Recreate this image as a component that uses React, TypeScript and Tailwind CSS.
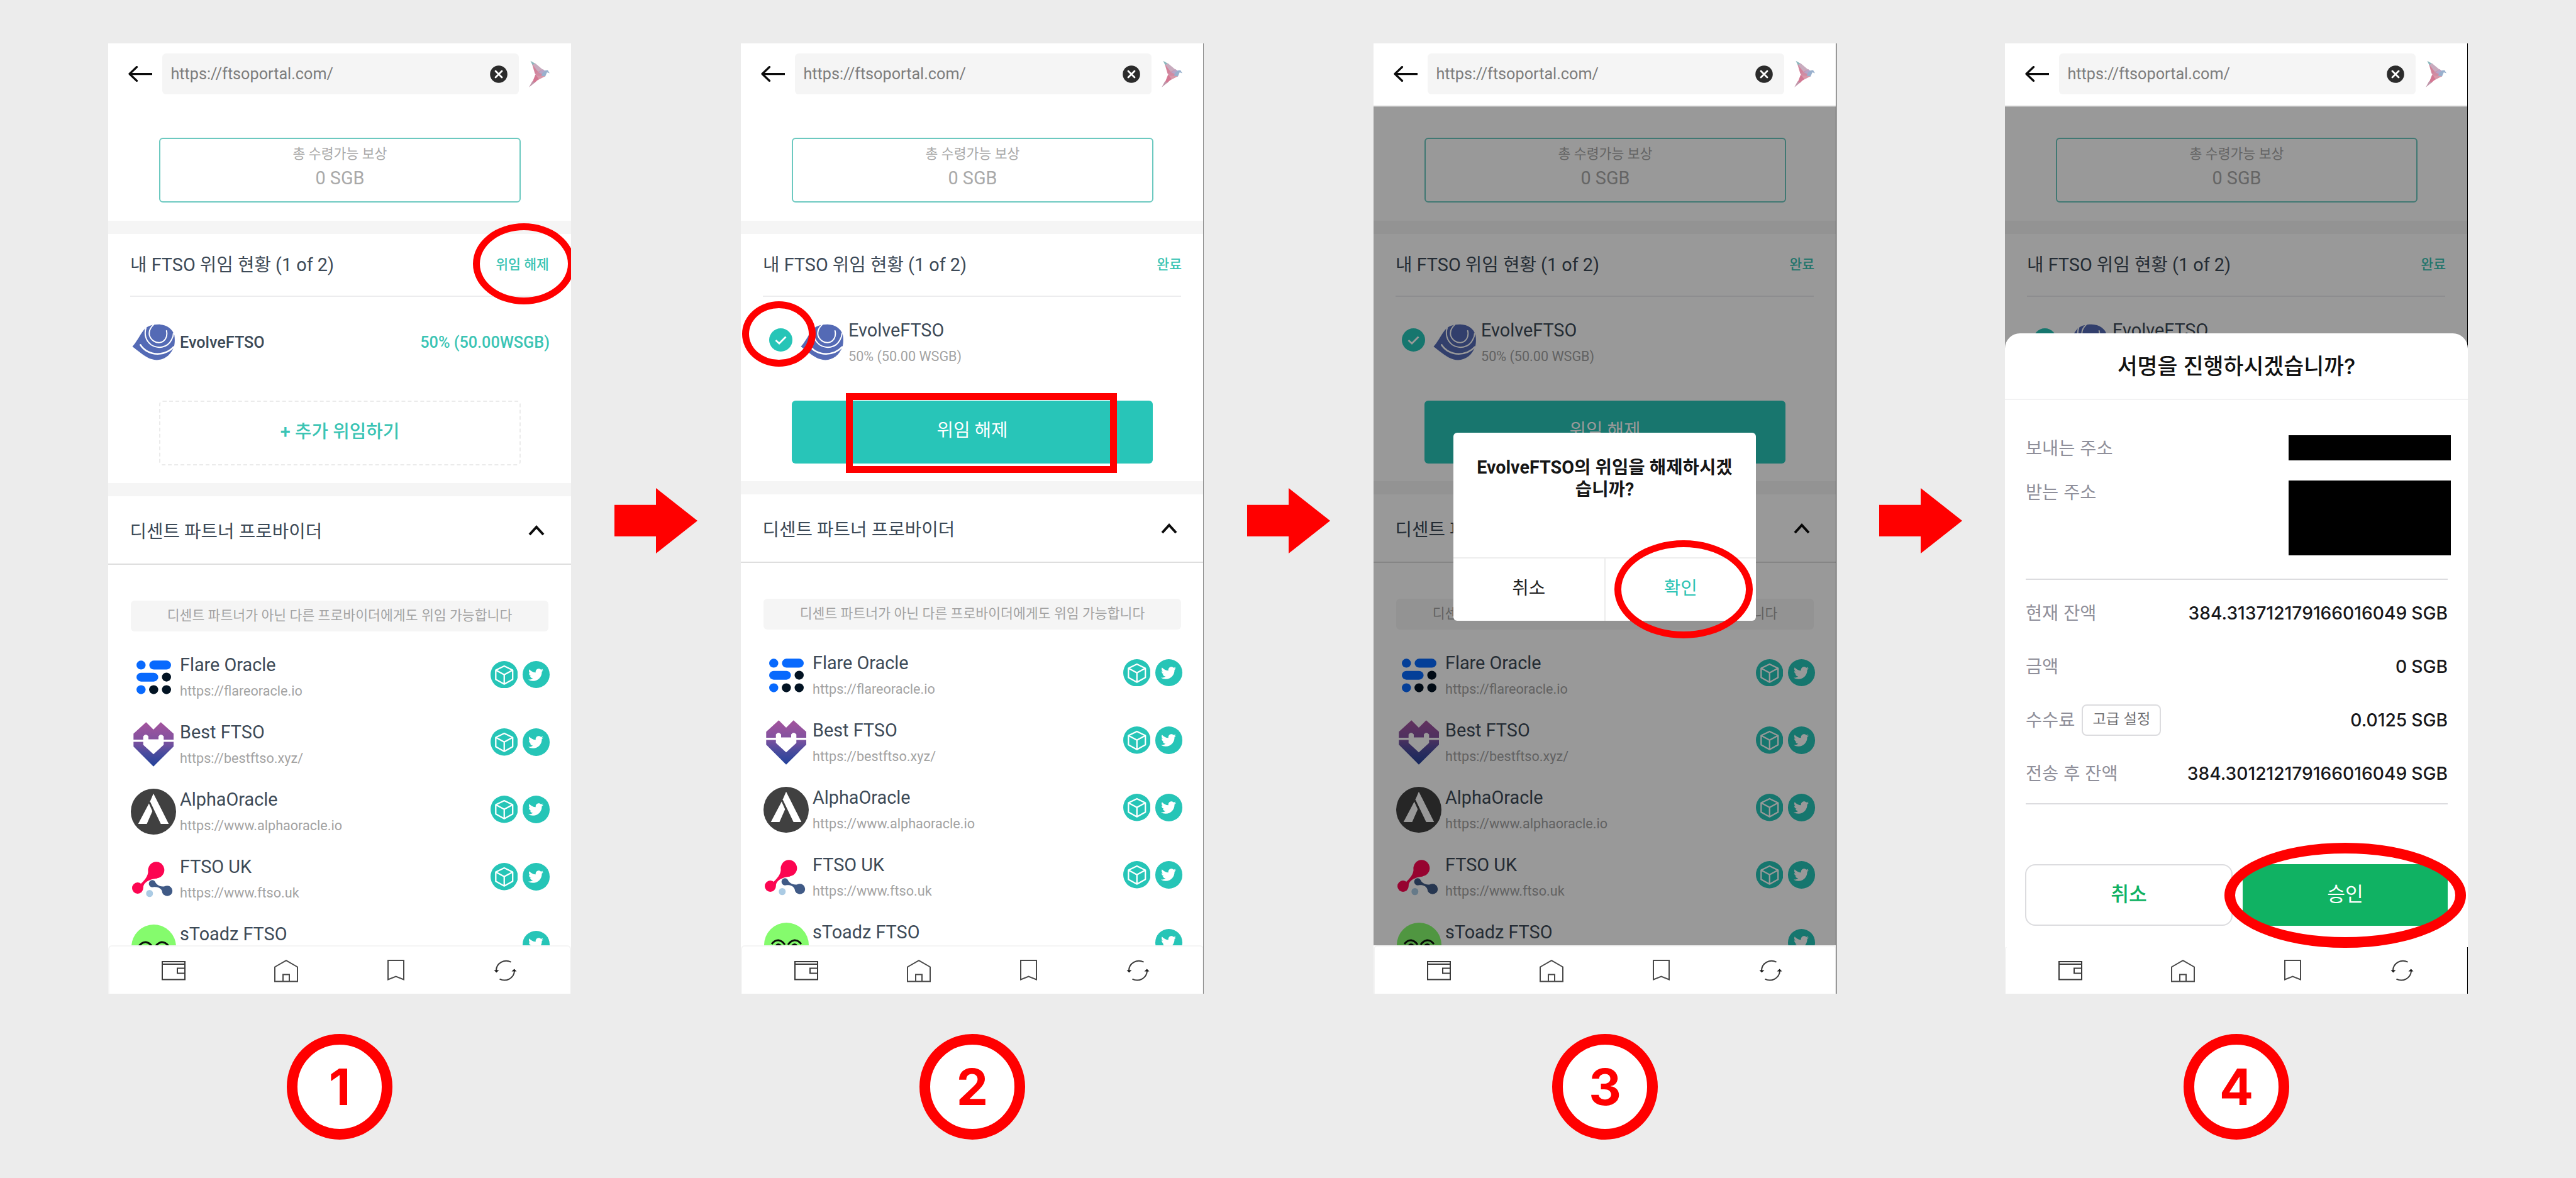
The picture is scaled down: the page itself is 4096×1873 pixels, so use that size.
import type { ReactNode } from "react";
import { FaTwitter } from "react-icons/fa";

/* ---------- icons ---------- */

function BackArrow() {
  return (
    <svg viewBox="0 0 76 50" className="h-[25px] w-[38px] shrink-0" fill="none" stroke="#0c0c0c" strokeWidth="6.5">
      <path d="M4 25H76" />
      <path d="M27 3L4 25L27 47" strokeLinejoin="round" strokeLinecap="round" />
    </svg>
  );
}

function ClearIcon() {
  return (
    <svg viewBox="0 0 28 28" className="size-[28px] shrink-0">
      <circle cx="14" cy="14" r="13.8" fill="#2b2b2b" />
      <path d="M9 9L19 19M19 9L9 19" stroke="#fff" strokeWidth="2.8" strokeLinecap="round" />
    </svg>
  );
}

function BirdLogo() {
  return (
    <svg viewBox="56 34 120 152" className="h-[43.5px] w-[34.4px] shrink-0 opacity-90">
      <path d="M68 37L96 52L80 62Z" fill="#7fb0b6" />
      <path d="M80 60L94 50L140 88L112 102Z" fill="#c3a3b8" />
      <path d="M77 54L114 102L93 108Z" fill="#cf7590" />
      <path d="M93 106L138 84L148 124L106 128Z" fill="#cb7f99" />
      <path d="M112 100L138 84L152 94L142 114Z" fill="#b09cc2" />
      <path d="M136 102L150 90L164 88L175 106L160 100L150 124L128 120Z" fill="#8ea8c8" />
      <path d="M94 118L150 122L108 144Z" fill="#d48ca0" />
      <path d="M96 112L114 138L92 158L76 162Z" fill="#d06a88" />
      <path d="M78 150L94 156L60 183Z" fill="#b98aa0" />
    </svg>
  );
}

function EvolveLogo() {
  return (
    <svg viewBox="30 113 238 204" className="h-[58px] w-[68px] shrink-0" fill="none">
      <path
        d="M31 240C52 218 70 180 94 148C112 126 140 116 180 116C222 117 256 140 266 176C270 200 268 226 264 240C246 288 212 314 168 315C128 314 102 296 31 240Z"
        fill="#546ab5"
      />
      <path d="M150 117C130 136 122 158 127 178C136 206 162 220 186 217C212 213 230 186 222 152" stroke="#fff" strokeWidth="7" strokeLinecap="round" />
      <path d="M108 132C96 168 104 206 136 230C172 252 226 250 250 202C258 188 261 176 261 164" stroke="#fff" strokeWidth="7" />
      <path d="M76 230C96 262 132 281 172 281C208 280 238 268 262 242" stroke="#fff" strokeWidth="9" strokeLinecap="round" />
    </svg>
  );
}

function FlareLogo() {
  return (
    <svg viewBox="96 113 189 167" preserveAspectRatio="none" className="h-[54px] w-[55px]">
      <ellipse cx="121" cy="136" rx="25" ry="22" fill="#0869fd" />
      <rect x="166" y="114" width="119" height="44" rx="25" ry="22" fill="#0869fd" />
      <rect x="96" y="174" width="119" height="43" rx="25" ry="22" fill="#0869fd" />
      <ellipse cx="260" cy="195" rx="25" ry="22" fill="#021323" />
      <ellipse cx="121" cy="257" rx="25" ry="22" fill="#0869fd" />
      <ellipse cx="190" cy="257" rx="25" ry="22" fill="#021323" />
      <ellipse cx="260" cy="257" rx="25" ry="22" fill="#021323" />
    </svg>
  );
}

function BestLogo() {
  return (
    <svg viewBox="79 418 224 224" preserveAspectRatio="none" className="h-[71px] w-[64px]">
      <defs>
        <linearGradient id="best" x1="0" y1="418" x2="0" y2="642" gradientUnits="userSpaceOnUse">
          <stop offset="0" stopColor="#a4549d" />
          <stop offset="0.4" stopColor="#83529f" />
          <stop offset="0.7" stopColor="#494b9d" />
          <stop offset="1" stopColor="#23429b" />
        </linearGradient>
      </defs>
      <path
        d="M80 506V476L150 419L191 456L232 419L303 476V506H248V490Q232 472 219 490V505H163V490Q148 472 134 490V506ZM80 517H134V532L191 580L248 532V517H303V541L191 641L80 541Z"
        fill="url(#best)"
      />
    </svg>
  );
}

function AlphaLogo() {
  return (
    <svg viewBox="65 755 252 227" preserveAspectRatio="none" className="h-[73px] w-[73px]">
      <ellipse cx="191" cy="868.5" rx="126" ry="113.5" fill="#404040" />
      <path d="M191 779L276 929H232L172 818Z" fill="#fff" />
      <path d="M166 828L185 866L154 929H106Z" fill="#fff" />
    </svg>
  );
}

function UkLogo() {
  return (
    <svg viewBox="75 1113 225 179" preserveAspectRatio="none" className="mr-[3px] h-[57px] w-[64.5px]">
      <ellipse cx="209" cy="1155" rx="45" ry="41" fill="#fc0551" />
      <ellipse cx="106" cy="1245" rx="31" ry="28" fill="#fc0551" />
      <path d="M165 1148C166 1178 156 1196 124 1223L137 1246C136 1224 156 1202 216 1196Z" fill="#fc0551" />
      <ellipse cx="187" cy="1223" rx="19" ry="18" fill="#405a86" />
      <ellipse cx="270" cy="1259" rx="29" ry="26" fill="#405a86" />
      <path d="M198 1209C212 1230 228 1240 258 1236L244 1266C236 1246 222 1238 192 1240Z" fill="#405a86" />
      <ellipse cx="172" cy="1272" rx="19" ry="18" fill="#abcbe4" />
    </svg>
  );
}

function ToadLogo() {
  return (
    <svg viewBox="0 0 142 142" className="size-[71px]">
      <circle cx="71" cy="71" r="71" fill="#85fb6d" />
      <path d="M24 68Q34 55 46 56Q58 58 66 70M76 70Q84 58 96 56Q108 55 118 68" stroke="#0b0f0a" strokeWidth="6" fill="none" />
      <path d="M34 74Q44 58 58 74ZM84 74Q98 58 108 74Z" fill="#0b0f0a" />
    </svg>
  );
}

function CubeBadge() {
  return (
    <svg viewBox="0 0 152 152" className="size-[43.5px] shrink-0">
      <circle cx="76" cy="76" r="76" fill="#26c5b7" />
      <path
        d="M76 28L123 51V102L76 128L29 102V51ZM29 51L76 76L123 51M76 76V128"
        fill="none"
        stroke="#fff"
        strokeWidth="8"
        strokeLinejoin="round"
      />
    </svg>
  );
}

function TwitterBadge() {
  return (
    <span className="flex size-[43.5px] shrink-0 items-center justify-center rounded-full bg-[#26c5b7]">
      <FaTwitter className="size-[24px] text-white" />
    </span>
  );
}

function CheckBadge() {
  return (
    <svg viewBox="0 0 37 37" className="size-[37px] shrink-0">
      <circle cx="18.5" cy="18.5" r="18.5" fill="#26c5b7" />
      <path d="M10.5 19L16 24L26.5 13.5" fill="none" stroke="#fff" strokeWidth="2.8" />
    </svg>
  );
}

function NavBar() {
  return (
    <nav className="h-[77px] shrink-0 rounded-t-[6px] border-2 border-b-0 border-[#f4f4f4] bg-white">
      <div className="flex h-full items-start pt-[21px] pl-[83px]">
        <svg viewBox="0 0 38 31" className="mt-[2px] h-[31px] w-[38px]" fill="none" stroke="#3a3a3a" strokeWidth="2">
          <path d="M1 1H37V29.5H1ZM1 5H37M37 11.5H25V19.5H37" />
        </svg>
        <svg viewBox="0 0 38 36" className="ml-[141px] h-[36px] w-[38px]" fill="none" stroke="#4a4a4a" strokeWidth="2">
          <path d="M19 1.2L37 11.5V34.5H1V11.5ZM14 34V23.5H24V34" />
        </svg>
        <svg viewBox="0 0 27 34" className="ml-[142px] h-[34px] w-[27px]" fill="none" stroke="#4a4a4a" strokeWidth="2">
          <path d="M1 1H26V31.5L13.5 26.5L1 31.5Z" />
        </svg>
        <svg viewBox="0 0 37 34" className="ml-[142px] h-[34px] w-[37px]" fill="none" stroke="#3a3a3a" strokeWidth="2">
          <path d="M27.5 3.6A16 15.6 0 0 0 4 17M9.5 30.6A16 15.6 0 0 0 33 18" />
          <path d="M0.5 16.5H8.5L4.3 20.5ZM28.5 18.6H36.5L32.7 14.6Z" fill="#1c1c1c" stroke="none" />
        </svg>
      </div>
    </nav>
  );
}

function StepArrow() {
  return (
    <svg viewBox="0 0 132 104" className="mt-[707px] h-[104px] w-[132px] shrink-0">
      <path d="M0 26.7H66V0L132 52L66 104V76.7H0Z" fill="#f00" />
    </svg>
  );
}

/* ---------- phone screen ---------- */

const providers = [
  { name: "Flare Oracle", url: "https://flareoracle.io", logo: <FlareLogo />, cube: true },
  { name: "Best FTSO", url: "https://bestftso.xyz/", logo: <BestLogo />, cube: true },
  { name: "AlphaOracle", url: "https://www.alphaoracle.io", logo: <AlphaLogo />, cube: true },
  { name: "FTSO UK", url: "https://www.ftso.uk", logo: <UkLogo />, cube: true },
  { name: "sToadz FTSO", url: "", logo: <ToadLogo />, cube: false },
];

function Header({ ruled }: { ruled: boolean }) {
  return (
    <header
      className={`flex h-[101px] shrink-0 items-start border-b-2 bg-white pl-[32px] ${ruled ? "border-[#bdbdbd]" : "border-white"}`}
    >
      <div className="flex h-[97px] items-center">
        <BackArrow />
        <div className="ml-[16px] flex h-[65px] w-[567px] items-center justify-between rounded-[6px] bg-[#f5f5f5] pr-[18px] pl-[13.5px]">
          <span className="text-[25.2px] leading-none text-[#7d7d7d]">https://ftsoportal.com/</span>
          <ClearIcon />
        </div>
        <div className="ml-[15px]">
          <BirdLogo />
        </div>
      </div>
    </header>
  );
}

function Screen({ editing, ruled = false, children }: { editing: boolean; ruled?: boolean; children?: ReactNode }) {
  return (
    <section className="relative flex h-[1511px] w-[736px] flex-col overflow-hidden bg-white">
      <Header ruled={ruled} />
      <div className="flex h-[1333px] shrink-0 flex-col overflow-hidden">
        <div className="h-[181px] shrink-0 px-[81px] pt-[49px]">
          <div className="flex h-[103px] w-[575px] flex-col items-center rounded-[6px] border-2 border-[#6cc9c0] pt-[10.5px] text-[#a9a9a9]">
            <span className="text-[21.6px] leading-[26px]">총 수령가능 보상</span>
            <span className="mt-[12.5px] text-[28.8px] leading-[27px]">0 SGB</span>
          </div>
        </div>
        <div className="h-[21px] shrink-0 bg-[#f5f5f5]" />
        <div className={`shrink-0 ${editing ? "h-[393px]" : "h-[396px]"}`}>
          <div className="mr-[36px] ml-[35px] flex h-[100px] items-center justify-between border-b-2 border-[#ececee] text-[#3d4a57]">
            <span className="text-[28.8px] leading-none">내 FTSO 위임 현황 (1 of 2)</span>
            <span className="-mr-[1px] text-[21.6px] leading-none font-medium text-[#3bc4b4]">{editing ? "완료" : "위임 해제"}</span>
          </div>
          {editing ? (
            <div className="flex h-[143px] items-center pl-[45px]">
              <div className="mb-[7px]">
                <CheckBadge />
              </div>
              <div className="ml-[13px]">
                <EvolveLogo />
              </div>
              <div className="ml-[8px] flex flex-col pt-[4px]">
                <span className="text-[28.8px] leading-[41px] text-[#3d4a57]">EvolveFTSO</span>
                <span className="text-[21.6px] leading-[41px] text-[#a3a3a3]">50% (50.00 WSGB)</span>
              </div>
            </div>
          ) : (
            <div className="flex h-[143px] items-center pr-[34px] pl-[38px] text-[25.2px] leading-none font-medium">
              <EvolveLogo />
              <span className="ml-[8px] pt-[3px] text-[#3d4a57]">EvolveFTSO</span>
              <span className="ml-auto pt-[3px] text-[#3bc4b4]">50% (50.00WSGB)</span>
            </div>
          )}
          <div className="mt-[22px] px-[81px]">
            {editing ? (
              <div className="flex h-[100px] items-center justify-center rounded-[6px] bg-[#28c5b8] pb-[5px] text-[28.8px] leading-none text-white">
                위임 해제
              </div>
            ) : (
              <div className="flex h-[103px] w-[575px] items-center justify-center rounded-[6px] border-2 border-dashed border-[#ebebeb] pb-[4px] text-[28.8px] leading-none font-medium text-[#3bc4b4]">
                + 추가 위임하기
              </div>
            )}
          </div>
        </div>
        <div className="h-[21px] shrink-0 bg-[#f5f5f5]" />
        <div className="flex h-[109px] shrink-0 items-center justify-between border-b-2 border-[#dedede] pr-[42px] pl-[34.5px] text-[28.8px] leading-none text-[#3d4a57]">
          <span className="pt-[5px]">디센트 파트너 프로바이더</span>
          <svg viewBox="0 0 26 17" className="mt-[2px] h-[17px] w-[26px]" fill="none" stroke="#0c0c0c" strokeWidth="4">
            <path d="M2 15L13 3L24 15" />
          </svg>
        </div>
        <div className="mx-[36px] mt-[57px] flex h-[49px] shrink-0 items-center justify-center rounded-[6px] bg-[#f5f5f5] pb-[2px] text-[21.6px] leading-none text-[#a3a3a3]">
          디센트 파트너가 아닌 다른 프로바이더에게도 위임 가능합니다
        </div>
        <ul className="mt-[15px] flex flex-col">
          {providers.map((p) => (
            <li key={p.name} className="flex h-[107.2px] shrink-0 items-center pr-[34px] pl-[36px]">
              <div className="mt-[8px] flex w-[72px] shrink-0 justify-center">{p.logo}</div>
              <div className="ml-[6px] flex h-[82px] flex-col pt-[5px]">
                <span className="text-[28.8px] leading-[41px] text-[#3d4a57]">{p.name}</span>
                {p.url && <span className="text-[21.6px] leading-[41px] text-[#a3a3a3]">{p.url}</span>}
              </div>
              <div className="ml-auto flex gap-[7.5px]">
                {p.cube && <CubeBadge />}
                <TwitterBadge />
              </div>
            </li>
          ))}
        </ul>
      </div>
      <NavBar />
      {children}
    </section>
  );
}

function Step({ n, children }: { n: number; children: ReactNode }) {
  return (
    <div className="flex shrink-0 flex-col items-center">
      {children}
      <div className="mt-[64px] flex size-[168px] items-center justify-center rounded-full border-[17px] border-[#f00] bg-white font-[Inter,sans-serif] text-[80px] leading-none font-bold text-[#f00]">
        {n}
      </div>
    </div>
  );
}

/* ---------- signing sheet ---------- */

function SheetRow({ label, value, action }: { label: string; value: string; action?: string }) {
  return (
    <div className="flex h-[85px] items-center justify-between">
      <div className="flex items-center">
        <span className="text-[28.4px] leading-none text-[#8f8f9a]">{label}</span>
        {action && (
          <span className="ml-[11px] flex h-[50px] w-[126px] items-center justify-center rounded-[8px] border-2 border-[#dcdcdf] pb-[2px] text-[23.2px] leading-none text-[#6e6e72]">
            {action}
          </span>
        )}
      </div>
      <span className="text-[28.2px] leading-none font-medium [word-spacing:-0.5px] text-[#17171a]">{value}</span>
    </div>
  );
}

function SignSheet() {
  return (
    <div className="absolute inset-x-0 top-[461px] flex h-[976px] flex-col rounded-t-[24px] bg-white font-[Inter,'Noto_Sans_CJK_KR',sans-serif]">
      <div className="flex h-[106px] items-center justify-center border-b-2 border-[#f2f2f3] text-[34.7px] leading-none font-medium text-[#111]">
        서명을 진행하시겠습니까?
      </div>
      <div className="flex h-[128px] items-start justify-between pt-[56px] pr-[27px] pl-[33px]">
        <span className="mt-[6px] text-[28.4px] leading-[30px] text-[#8f8f9a]">보내는 주소</span>
        <span className="h-[39.5px] w-[258px] bg-black" />
      </div>
      <div className="flex h-[155.5px] items-start justify-between pr-[27px] pl-[33px]">
        <span className="mt-[4px] text-[28.4px] leading-[30px] text-[#8f8f9a]">받는 주소</span>
        <span className="h-[119px] w-[258px] bg-black" />
      </div>
      <div className="mr-[32px] ml-[33px] flex h-[359px] flex-col border-y-2 border-[#dcdcdf] pt-[11px]">
        <SheetRow label="현재 잔액" value="384.313712179166016049 SGB" />
        <SheetRow label="금액" value="0 SGB" />
        <SheetRow label="수수료" value="0.0125 SGB" action="고급 설정" />
        <SheetRow label="전송 후 잔액" value="384.301212179166016049 SGB" />
      </div>
      <div className="mt-[95px] mr-[32px] ml-[32px] flex h-[98px] gap-[16px] text-[31.3px] leading-none">
        <div className="flex flex-1 items-center justify-center rounded-[16px] border-2 border-[#dcdcdf] font-medium text-[#10b263]">취소</div>
        <div className="flex flex-1 items-center justify-center rounded-[16px] bg-[#10b263] text-white">승인</div>
      </div>
    </div>
  );
}

function ConfirmDialog() {
  return (
    <div className="absolute top-[618.5px] left-[127px] flex h-[299px] w-[481px] flex-col overflow-hidden rounded-[6px] bg-white text-center">
      <p className="h-[198px] pt-[38px] text-[28.7px] leading-[35.8px] font-bold text-[#161616]">
        EvolveFTSO의 위임을 해제하시겠
        <br />
        습니까?
      </p>
      <div className="flex flex-1 border-t-2 border-[#ededed] text-[28.8px] leading-none">
        <div className="flex flex-1 items-center justify-center border-r-2 border-[#ededed] pb-[4px] text-[#222]">취소</div>
        <div className="flex flex-1 items-center justify-center pb-[4px] text-[#2cc3b4]">확인</div>
      </div>
    </div>
  );
}

export default function App() {
  return (
    <main className="h-[1873px] w-[4096px] overflow-hidden bg-[#ececec] font-[Roboto,'Noto_Sans_CJK_KR',sans-serif]">
      <div className="flex items-start pt-[69px] pl-[172px] whitespace-nowrap">
        <Step n={1}>
          <Screen editing={false}>
            <div className="absolute top-[286px] left-[580px] h-[129px] w-[162px] rounded-[50%] border-[11px] border-[#f00]" />
          </Screen>
        </Step>
        <div className="flex w-[270px] shrink-0 justify-center">
          <StepArrow />
        </div>
        <Step n={2}>
          <Screen editing>
            <div className="absolute top-[409.5px] left-[1.5px] h-[104px] w-[117px] rounded-[50%] border-[11px] border-[#f00]" />
            <div className="absolute top-[555.5px] left-[167px] h-[127px] w-[431px] border-[11px] border-[#f00]" />
            <div className="absolute inset-y-0 right-0 w-px bg-[#8a8a8a]" />
          </Screen>
        </Step>
        <div className="flex w-[270px] shrink-0 justify-center">
          <StepArrow />
        </div>
        <Step n={3}>
          <Screen editing ruled>
            <div className="absolute inset-x-0 top-[101px] h-[1333px] bg-black/40" />
            <div className="absolute inset-y-0 right-0 w-px bg-black" />
            <ConfirmDialog />
            <div className="absolute top-[790px] left-[382.5px] h-[155.5px] w-[220.5px] rounded-[50%] border-[11px] border-[#f00]" />
          </Screen>
        </Step>
        <div className="flex w-[268px] shrink-0 justify-center">
          <StepArrow />
        </div>
        <Step n={4}>
          <Screen editing ruled>
            <div className="absolute inset-x-0 top-[101px] h-[1333px] bg-black/40" />
            <div className="absolute inset-y-0 right-0 w-px bg-black" />
            <SignSheet />
            <div className="absolute top-[1271px] left-[349px] h-[166.5px] w-[384px] rounded-[50%] border-[17px] border-[#f00]" />
          </Screen>
        </Step>
      </div>
    </main>
  );
}
